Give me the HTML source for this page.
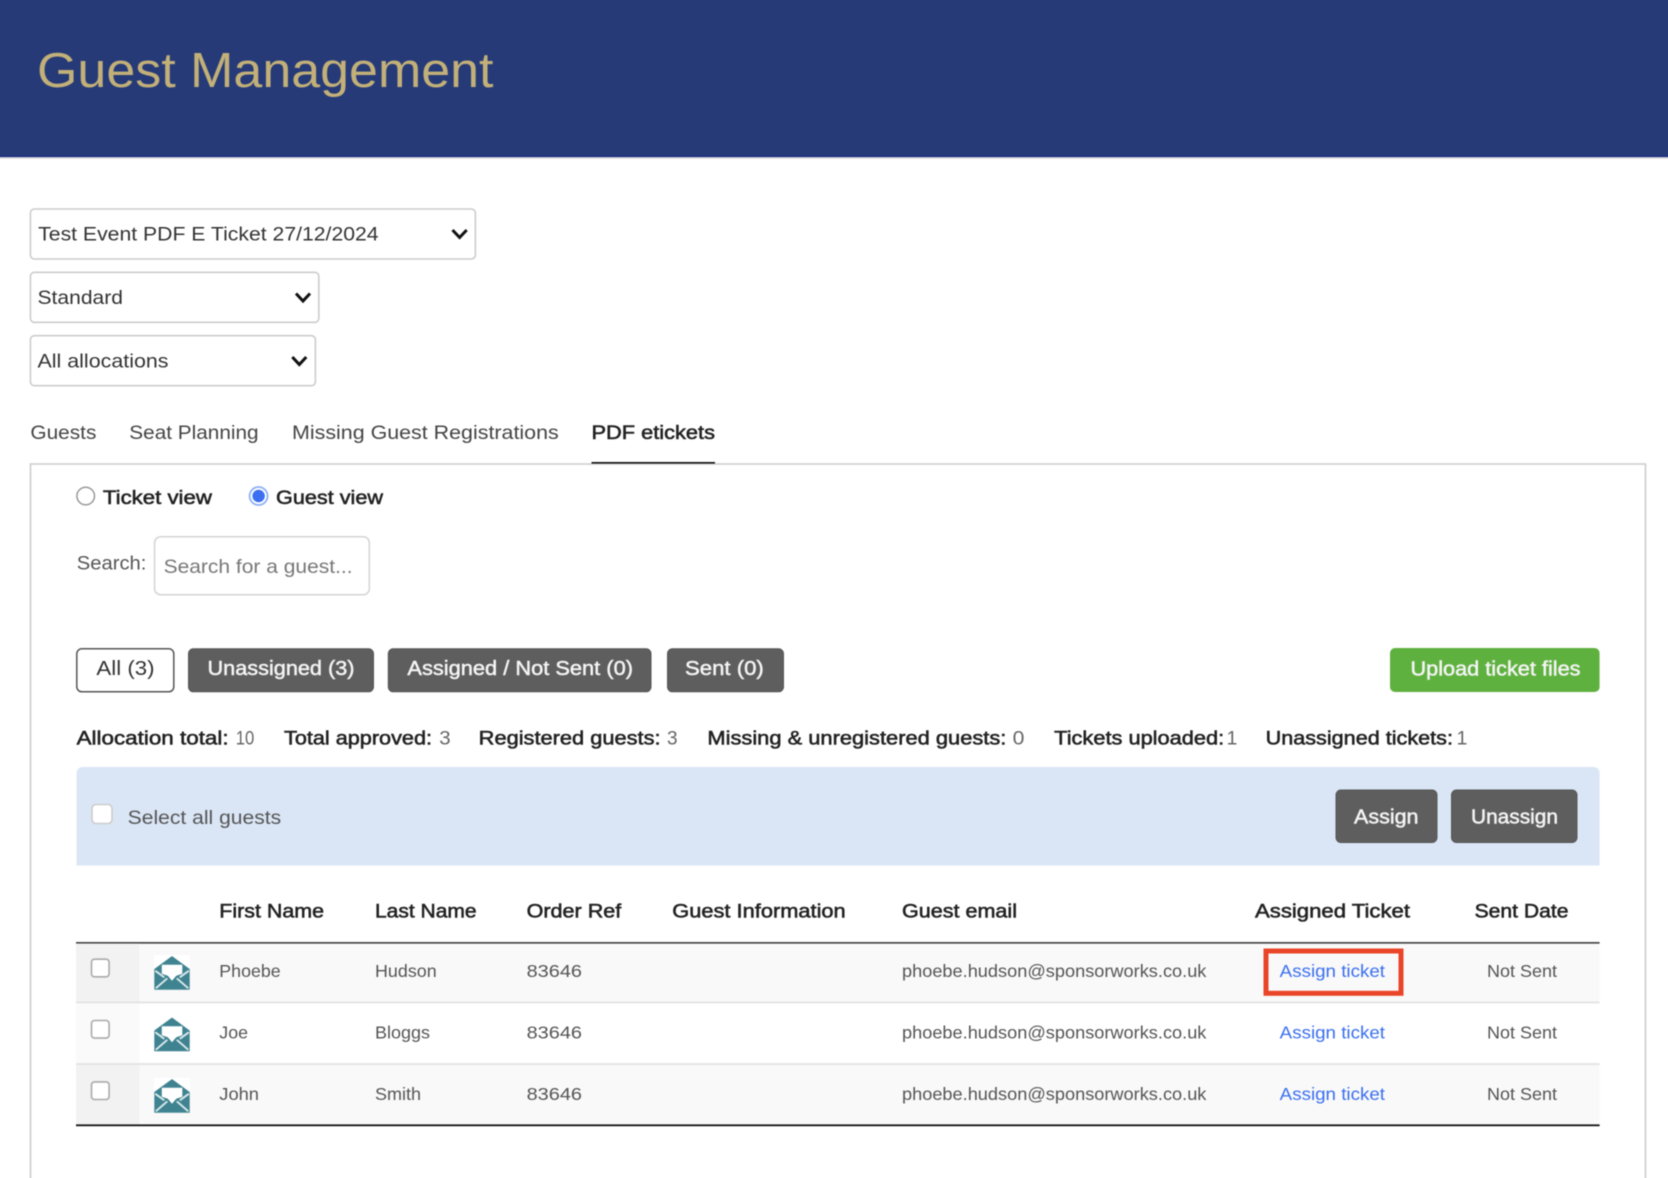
<!DOCTYPE html>
<html lang="en"><head><meta charset="utf-8"><title>Guest Management</title>
<style>
html,body{margin:0;padding:0;background:#fff;width:1668px;height:1178px;overflow:hidden}
svg{display:block;filter:blur(.4px);overflow:visible}
text{font-family:"Liberation Sans",Arial,sans-serif;font-size:19.5px;fill:#333}
.b{fill:#222;stroke:#222;stroke-width:.55}
.w{fill:#f4f4f4;stroke:#f4f4f4;stroke-width:.5;font-size:20px}
.r{font-size:17.5px;fill:#555}
.h{font-size:19.5px;fill:#222;stroke:#222;stroke-width:.55}
.l{font-size:17.5px;fill:#3a6ff0}
.g{fill:#5e5e5e;stroke:#555;stroke-width:1}
.c{fill:#fff;stroke:#aaa;stroke-width:1.6}
.chev{fill:none;stroke:#111;stroke-width:3}
</style></head><body>
<svg width="1668" height="1178" viewBox="0 0 1668 1178" xmlns="http://www.w3.org/2000/svg">
<defs><g id="env">
<path d="M17.7 0.3 L34.9 13 V33 H0.5 V13 Z" fill="#3f8391" stroke="#3f8391" stroke-linejoin="round"/>
<path d="M1 14.5 L10 21 M34.5 14.5 L25.5 21 M1.5 32 L13 22 M34 32 L22.5 22" fill="none" stroke="#dbe9ec" stroke-width="1.9"/>
<path d="M7.5 8.5 H28 V17.5 L22 19.5 L17.7 24.5 L13.5 19.5 L7.5 17.5 Z" fill="#fff"/>
</g></defs>

<!-- header -->
<rect x="-8" y="-8" width="1690" height="165" fill="#263a78"/>
<rect x="-8" y="156" width="1690" height="1.2" fill="#101f7e"/>
<rect x="-8" y="157.2" width="1690" height="1.6" fill="#d8d8d8"/>
<text x="37" y="87" textLength="456.5" lengthAdjust="spacingAndGlyphs" style="font-size:49px;fill:#c2b078">Guest Management</text>

<!-- selects -->
<rect x="30.4" y="209" width="445" height="50" rx="4" fill="#fff" stroke="#ccc" stroke-width="1.6"/>
<text x="38.2" y="240.7" textLength="340.4" lengthAdjust="spacingAndGlyphs">Test Event PDF E Ticket 27/12/2024</text>
<path class="chev" d="M452.5 230 L459.6 237.5 L466.7 230"/>
<rect x="30.4" y="272.3" width="288.4" height="50" rx="4" fill="#fff" stroke="#ccc" stroke-width="1.6"/>
<text x="37.5" y="304" textLength="85.5" lengthAdjust="spacingAndGlyphs">Standard</text>
<path class="chev" d="M296 293.5 L303 301 L310 293.5"/>
<rect x="30.4" y="335.7" width="285" height="50" rx="4" fill="#fff" stroke="#ccc" stroke-width="1.6"/>
<text x="37.5" y="367.7" textLength="131" lengthAdjust="spacingAndGlyphs">All allocations</text>
<path class="chev" d="M292.3 357 L299.3 364.5 L306.3 357"/>

<!-- panel -->
<path d="M30.5 1190 V464 H1645.5 V1190" fill="#fff" stroke="#ccc" stroke-width="1.6"/>

<!-- tabs -->
<text x="30.4" y="439" textLength="66" lengthAdjust="spacingAndGlyphs" style="fill:#444">Guests</text>
<text x="129.3" y="439" textLength="129.3" lengthAdjust="spacingAndGlyphs" style="fill:#444">Seat Planning</text>
<text x="292" y="439" textLength="266.7" lengthAdjust="spacingAndGlyphs" style="fill:#444">Missing Guest Registrations</text>
<text x="591.5" y="439" textLength="123.5" lengthAdjust="spacingAndGlyphs" class="b">PDF etickets</text>
<rect x="591.5" y="462" width="123.5" height="1.6" fill="#111"/>

<!-- radios -->
<circle cx="85.7" cy="496" r="8.8" fill="#fff" stroke="#999" stroke-width="1.5"/>
<text x="102.9" y="504" textLength="109" lengthAdjust="spacingAndGlyphs" class="b">Ticket view</text>
<circle cx="258.6" cy="496" r="9" fill="#fff" stroke="#8fb0f7" stroke-width="1.8"/>
<circle cx="258.6" cy="496" r="6.2" fill="#3a6ff0"/>
<text x="276" y="504" textLength="107" lengthAdjust="spacingAndGlyphs" class="b">Guest view</text>

<!-- search -->
<text x="76.8" y="569.3" textLength="69.6" lengthAdjust="spacingAndGlyphs" style="fill:#555">Search:</text>
<rect x="154.6" y="536.7" width="214.7" height="58" rx="6" fill="#fff" stroke="#d4d4d4" stroke-width="1.5"/>
<text x="163.6" y="573" textLength="189" lengthAdjust="spacingAndGlyphs" style="fill:#777">Search for a guest...</text>

<!-- filter buttons -->
<rect x="76.8" y="648.8" width="97" height="43" rx="5" fill="#fff" stroke="#555" stroke-width="1.5"/>
<text x="96.4" y="675" textLength="58.2" lengthAdjust="spacingAndGlyphs" style="font-size:20px;fill:#333">All (3)</text>
<rect class="g" x="188.5" y="648.8" width="185" height="43" rx="5"/>
<text class="w" x="207.5" y="675" textLength="147" lengthAdjust="spacingAndGlyphs">Unassigned (3)</text>
<rect class="g" x="388.3" y="648.8" width="262.7" height="43" rx="5"/>
<text class="w" x="407.4" y="675" textLength="225.6" lengthAdjust="spacingAndGlyphs">Assigned / Not Sent (0)</text>
<rect class="g" x="667.5" y="648.8" width="116" height="43" rx="5"/>
<text class="w" x="685" y="675" textLength="78.8" lengthAdjust="spacingAndGlyphs">Sent (0)</text>
<rect x="1390" y="648" width="209.6" height="44" rx="5" fill="#5fb13f"/>
<text class="w" x="1410.5" y="675.5" textLength="170" lengthAdjust="spacingAndGlyphs">Upload ticket files</text>

<!-- stats -->
<text class="b" x="76.6" y="744.3" textLength="152" lengthAdjust="spacingAndGlyphs">Allocation total:</text><text x="235.7" y="744.3" textLength="18.6" lengthAdjust="spacingAndGlyphs" style="fill:#666">10</text>
<text class="b" x="284" y="744.3" textLength="148" lengthAdjust="spacingAndGlyphs">Total approved:</text><text x="439.3" y="744.3" textLength="11.4" lengthAdjust="spacingAndGlyphs" style="fill:#666">3</text>
<text class="b" x="478.7" y="744.3" textLength="181.9" lengthAdjust="spacingAndGlyphs">Registered guests:</text><text x="667" y="744.3" textLength="10.6" lengthAdjust="spacingAndGlyphs" style="fill:#666">3</text>
<text class="b" x="707.4" y="744.3" textLength="299" lengthAdjust="spacingAndGlyphs">Missing &amp; unregistered guests:</text><text x="1012.7" y="744.3" textLength="11.8" lengthAdjust="spacingAndGlyphs" style="fill:#666">0</text>
<text class="b" x="1054.2" y="744.3" textLength="170" lengthAdjust="spacingAndGlyphs">Tickets uploaded:</text><text x="1226.5" y="744.3" style="fill:#666">1</text>
<text class="b" x="1265.6" y="744.3" textLength="187.4" lengthAdjust="spacingAndGlyphs">Unassigned tickets:</text><text x="1456.5" y="744.3" style="fill:#666">1</text>

<!-- selection bar -->
<path d="M76.6 865.5 V773 a6 6 0 0 1 6 -6 H1593.6 a6 6 0 0 1 6 6 V865.5 Z" fill="#dae6f6"/>
<rect x="92" y="804.5" width="20" height="19" rx="4" fill="#fff" stroke="#ccc" stroke-width="1.6"/>
<text x="127.7" y="824" textLength="153.5" lengthAdjust="spacingAndGlyphs" style="fill:#555">Select all guests</text>
<rect class="g" x="1336" y="790" width="101" height="52.5" rx="5"/>
<text class="w" x="1354" y="823.5" textLength="64.5" lengthAdjust="spacingAndGlyphs">Assign</text>
<rect class="g" x="1451.5" y="790" width="125.5" height="52.5" rx="5"/>
<text class="w" x="1471" y="823.5" textLength="87" lengthAdjust="spacingAndGlyphs">Unassign</text>

<!-- table head -->
<text class="h" x="219.3" y="917.3" textLength="104.7" lengthAdjust="spacingAndGlyphs">First Name</text>
<text class="h" x="375" y="917.3" textLength="101.6" lengthAdjust="spacingAndGlyphs">Last Name</text>
<text class="h" x="526.6" y="917.3" textLength="94.7" lengthAdjust="spacingAndGlyphs">Order Ref</text>
<text class="h" x="672.3" y="917.3" textLength="173.4" lengthAdjust="spacingAndGlyphs">Guest Information</text>
<text class="h" x="902" y="917.3" textLength="115" lengthAdjust="spacingAndGlyphs">Guest email</text>
<text class="h" x="1255" y="917.3" textLength="155" lengthAdjust="spacingAndGlyphs">Assigned Ticket</text>
<text class="h" x="1474.6" y="917.3" textLength="93.9" lengthAdjust="spacingAndGlyphs">Sent Date</text>
<rect x="76" y="942" width="1523.6" height="1.8" fill="#444"/>

<!-- rows -->
<rect x="76" y="943.8" width="1523.6" height="58" fill="#f9f9f9"/>
<rect x="76" y="943.8" width="63.3" height="58" fill="#f2f2f2"/>
<rect x="76" y="1001.5" width="1523.6" height="1.8" fill="#e2e2e2"/>
<rect x="76" y="1003.3" width="63.3" height="60" fill="#fafafa"/>
<rect x="76" y="1063.2" width="1523.6" height="1.8" fill="#e2e2e2"/>
<rect x="76" y="1065" width="1523.6" height="59.4" fill="#f9f9f9"/>
<rect x="76" y="1065" width="63.3" height="59.4" fill="#f2f2f2"/>
<rect x="76" y="1124.4" width="1523.6" height="1.8" fill="#111"/>

<rect class="c" x="91.5" y="959.2" width="17.6" height="17.6" rx="3"/>
<rect class="c" x="91.5" y="1020.5" width="17.6" height="17.6" rx="3"/>
<rect class="c" x="91.5" y="1081.9" width="17.6" height="17.6" rx="3"/>

<rect x="154" y="955" width="36" height="35" fill="#fff"/>
<rect x="154" y="1078" width="36" height="35" fill="#fff"/>
<use href="#env" transform="translate(154.3 956.3)"/>
<use href="#env" transform="translate(154.3 1017.8)"/>
<use href="#env" transform="translate(154.3 1079.3)"/>

<text class="r" x="219.3" y="977" textLength="61.4" lengthAdjust="spacingAndGlyphs">Phoebe</text>
<text class="r" x="375" y="977" textLength="61.7" lengthAdjust="spacingAndGlyphs">Hudson</text>
<text class="r" x="526.6" y="977" textLength="55.4" lengthAdjust="spacingAndGlyphs">83646</text>
<text class="r" x="902" y="977" textLength="304.4" lengthAdjust="spacingAndGlyphs">phoebe.hudson@sponsorworks.co.uk</text>
<text class="l" x="1279.7" y="977" textLength="105.3" lengthAdjust="spacingAndGlyphs">Assign ticket</text>
<text class="r" x="1487" y="977" textLength="70" lengthAdjust="spacingAndGlyphs">Not Sent</text>

<text class="r" x="219.3" y="1038.7" textLength="28.7" lengthAdjust="spacingAndGlyphs">Joe</text>
<text class="r" x="375" y="1038.7" textLength="55" lengthAdjust="spacingAndGlyphs">Bloggs</text>
<text class="r" x="526.6" y="1038.7" textLength="55.4" lengthAdjust="spacingAndGlyphs">83646</text>
<text class="r" x="902" y="1038.7" textLength="304.4" lengthAdjust="spacingAndGlyphs">phoebe.hudson@sponsorworks.co.uk</text>
<text class="l" x="1279.7" y="1038.7" textLength="105.3" lengthAdjust="spacingAndGlyphs">Assign ticket</text>
<text class="r" x="1487" y="1038.7" textLength="70" lengthAdjust="spacingAndGlyphs">Not Sent</text>

<text class="r" x="219.3" y="1100.2" textLength="39.7" lengthAdjust="spacingAndGlyphs">John</text>
<text class="r" x="375" y="1100.2" textLength="46" lengthAdjust="spacingAndGlyphs">Smith</text>
<text class="r" x="526.6" y="1100.2" textLength="55.4" lengthAdjust="spacingAndGlyphs">83646</text>
<text class="r" x="902" y="1100.2" textLength="304.4" lengthAdjust="spacingAndGlyphs">phoebe.hudson@sponsorworks.co.uk</text>
<text class="l" x="1279.7" y="1100.2" textLength="105.3" lengthAdjust="spacingAndGlyphs">Assign ticket</text>
<text class="r" x="1487" y="1100.2" textLength="70" lengthAdjust="spacingAndGlyphs">Not Sent</text>

<!-- annotation -->
<rect x="1266" y="951" width="135" height="42.3" fill="none" stroke="#ea4528" stroke-width="5"/>
</svg>
</body></html>
